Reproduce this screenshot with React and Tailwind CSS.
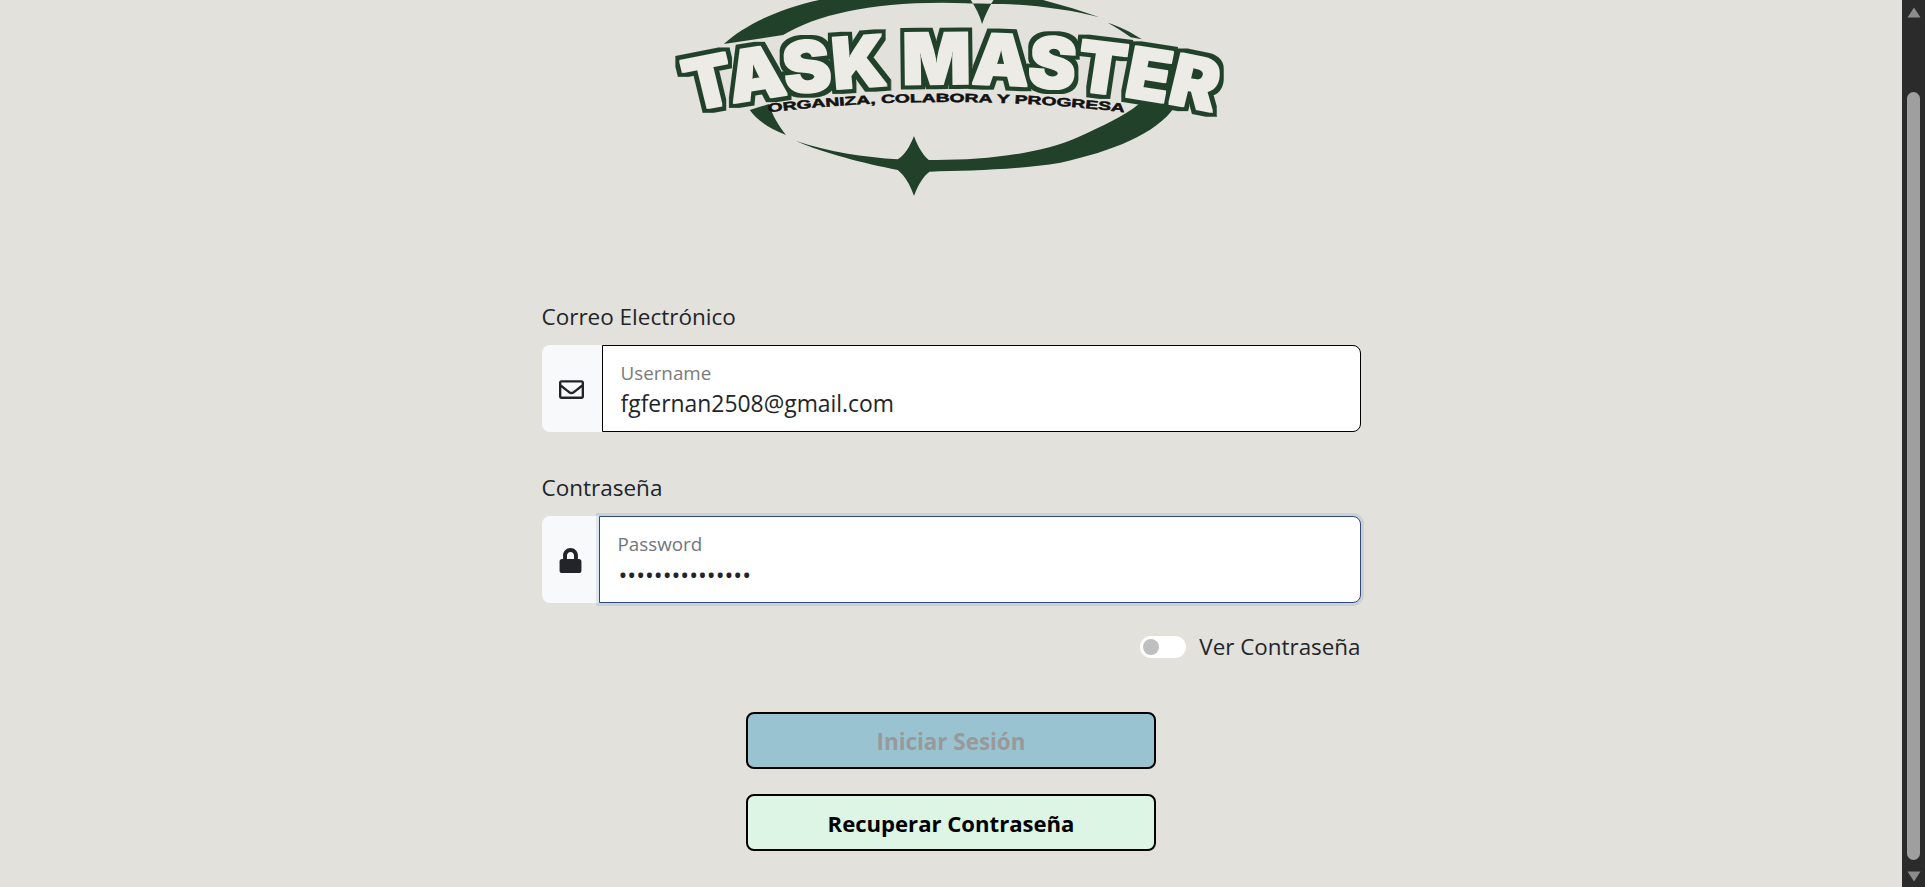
import React from "react";
import { FaRegEnvelope, FaLock } from "react-icons/fa";

const font = { fontFamily: '"Open Sans", "Noto Sans", sans-serif' };

function Logo() {
  return (
    <svg viewBox="0 0 1568 630" preserveAspectRatio="none" className="block w-[580px] h-[210px] mx-auto shrink-0">
      <defs>
        <path id="arcMain" d="M 80 335 Q 790 166 1512 342" />
        <path id="arcSub" d="M 290 337 Q 770 275 1256 337" />
        <filter id="logoOutline" filterUnits="userSpaceOnUse" x="0" y="0" width="1568" height="420" colorInterpolationFilters="sRGB">
          <feMorphology in="SourceAlpha" operator="dilate" radius="3" result="thick" />
          <feMorphology in="SourceAlpha" operator="dilate" radius="14" result="outer" />
          <feFlood floodColor="#22412a" />
          <feComposite in2="outer" operator="in" result="dark" />
          <feFlood floodColor="#ecebe6" />
          <feComposite in2="thick" operator="in" result="light" />
          <feMerge>
            <feMergeNode in="dark" />
            <feMergeNode in="light" />
          </feMerge>
        </filter>
      </defs>
      <g fill="#22412a">
        <path d="M170 132 C 250 50 400 -10 560 -20 L 825 -20 C 845 10 860 40 868 72 C 878 40 890 15 910 -20 L 965 -20 C 1050 5 1120 25 1185 52 C 1110 30 1010 15 925 12 L 760 8 C 560 8 420 45 330 105 Z" />
        <path d="M1208 68 C 1240 80 1270 95 1300 118 L 1270 112 C 1250 95 1230 82 1208 68 Z" />
        <path d="M240 330 L 292 312 C 300 345 320 380 338 405 C 290 385 260 360 240 330 Z" />
        <path d="M365 423 C 450 455 550 472 640 478 C 660 465 672 440 684 408 C 694 440 708 465 724 480 C 860 482 1020 465 1130 410 C 1190 380 1250 350 1292 312 L 1388 322 C 1340 400 1220 455 1080 488 C 960 510 830 512 726 515 C 708 530 695 555 684 588 C 674 555 660 528 640 510 C 550 490 440 460 365 423 Z" />
      </g>
      <text
        fill="#000"
        filter="url(#logoOutline)"
        fontWeight="900"
        fontSize="212"
        style={{ fontFamily: '"Inter", "DejaVu Sans", sans-serif' }}
      >
        <textPath href="#arcMain" textLength="1425" lengthAdjust="spacingAndGlyphs">TASK MASTER</textPath>
      </text>
      <text
        fill="#111111"
        stroke="#111111"
        strokeWidth="1.5"
        fontWeight="700"
        fontSize="36"
        style={{ fontFamily: '"Liberation Sans", sans-serif' }}
      >
        <textPath href="#arcSub" textLength="965" lengthAdjust="spacingAndGlyphs">ORGANIZA, COLABORA Y PROGRESA</textPath>
      </text>
    </svg>
  );
}

function Field({ label, icon, addon, inputCls, floating, floatCls, value, type, valueCls }) {
  return (
    <div className="flex flex-col">
      <label className="text-[22.5px] leading-[28px] text-[#212529] mb-[14px]">{label}</label>
      <div className="flex h-[87px]">
        <div className={`${addon} flex items-center justify-center pt-[2px] bg-[#f8f9fa] rounded-l-lg text-[#212529] text-[25px]`}>
          {icon}
        </div>
        <div className={`flex-1 relative bg-white rounded-r-lg ${inputCls}`}>
          <span className={`absolute left-[18px] top-[15px] text-[18.8px] leading-6 ${floatCls}`}>{floating}</span>
          <input
            readOnly
            type={type}
            value={value}
            className={`absolute w-[700px] h-[32px] text-[#212529] outline-none bg-transparent ${valueCls}`}
            style={font}
          />
        </div>
      </div>
    </div>
  );
}

export default function App() {
  return (
    <div className="flex h-[887px] w-full overflow-hidden bg-[#e2e1dc]" style={font}>
      <main className="flex-1 flex flex-col overflow-hidden">
        <Logo />
        <form className="w-[819px] mx-auto mt-[93px] flex flex-col">
          <Field
            label="Correo Electrónico"
            icon={<FaRegEnvelope />}
            addon="w-[60px]"
            inputCls="border border-black"
            floating="Username"
            floatCls="text-[#7a7a7a]"
            value="fgfernan2508@gmail.com"
            type="text"
            valueCls="left-[18px] top-[42px] text-[22.9px]"
          />
          <div className="h-[42px]" />
          <Field
            label="Contraseña"
            icon={<FaLock />}
            addon="w-[57px]"
            inputCls="border border-[#2f4a78] shadow-[0_0_0_3px_rgba(60,100,170,0.12)]"
            floating="Password"
            floatCls="text-[#6f7680]"
            value="aaaaaaaaaaaaaaa"
            type="password"
            valueCls="left-[19px] top-[43px] text-[23.5px]"
          />
          <div className="flex items-center justify-end gap-[13px] mt-[30px] h-[28px]">
            <span className="w-[46px] h-[22px] rounded-full bg-white flex items-center pl-[3px]">
              <span className="w-[16px] h-[16px] rounded-full bg-[#bfbfbf]" />
            </span>
            <span className="text-[22.4px] text-[#212529] leading-[28px]">Ver Contraseña</span>
          </div>
          <div className="flex flex-col items-center gap-[25px] mt-[51px]">
            <button type="button" disabled className="w-[410px] h-[57px] pt-[2px] border-2 border-black rounded-lg bg-[#99c3d1] text-[#999999] font-bold text-[22.4px]">
              Iniciar Sesión
            </button>
            <button type="button" className="w-[410px] h-[57px] pt-[2px] border-2 border-black rounded-lg bg-[#dcf5e5] text-black font-bold text-[22.1px]">
              Recuperar Contraseña
            </button>
          </div>
        </form>
      </main>
      <aside className="w-[23px] shrink-0 bg-[#2b2b2b] flex flex-col items-center">
        <svg viewBox="0 0 14 11" className="w-[14px] h-[11px] mt-[7px] shrink-0">
          <path d="M7 0.5 L13.5 10.5 L0.5 10.5 Z" fill="#8c8c8c" />
        </svg>
        <div className="w-[13px] h-[768px] mt-[74px] rounded-full bg-[#9f9f9f] shrink-0" />
        <svg viewBox="0 0 14 11" className="w-[14px] h-[11px] mt-[11px] shrink-0">
          <path d="M0.5 0.5 L13.5 0.5 L7 10.5 Z" fill="#8c8c8c" />
        </svg>
      </aside>
    </div>
  );
}
